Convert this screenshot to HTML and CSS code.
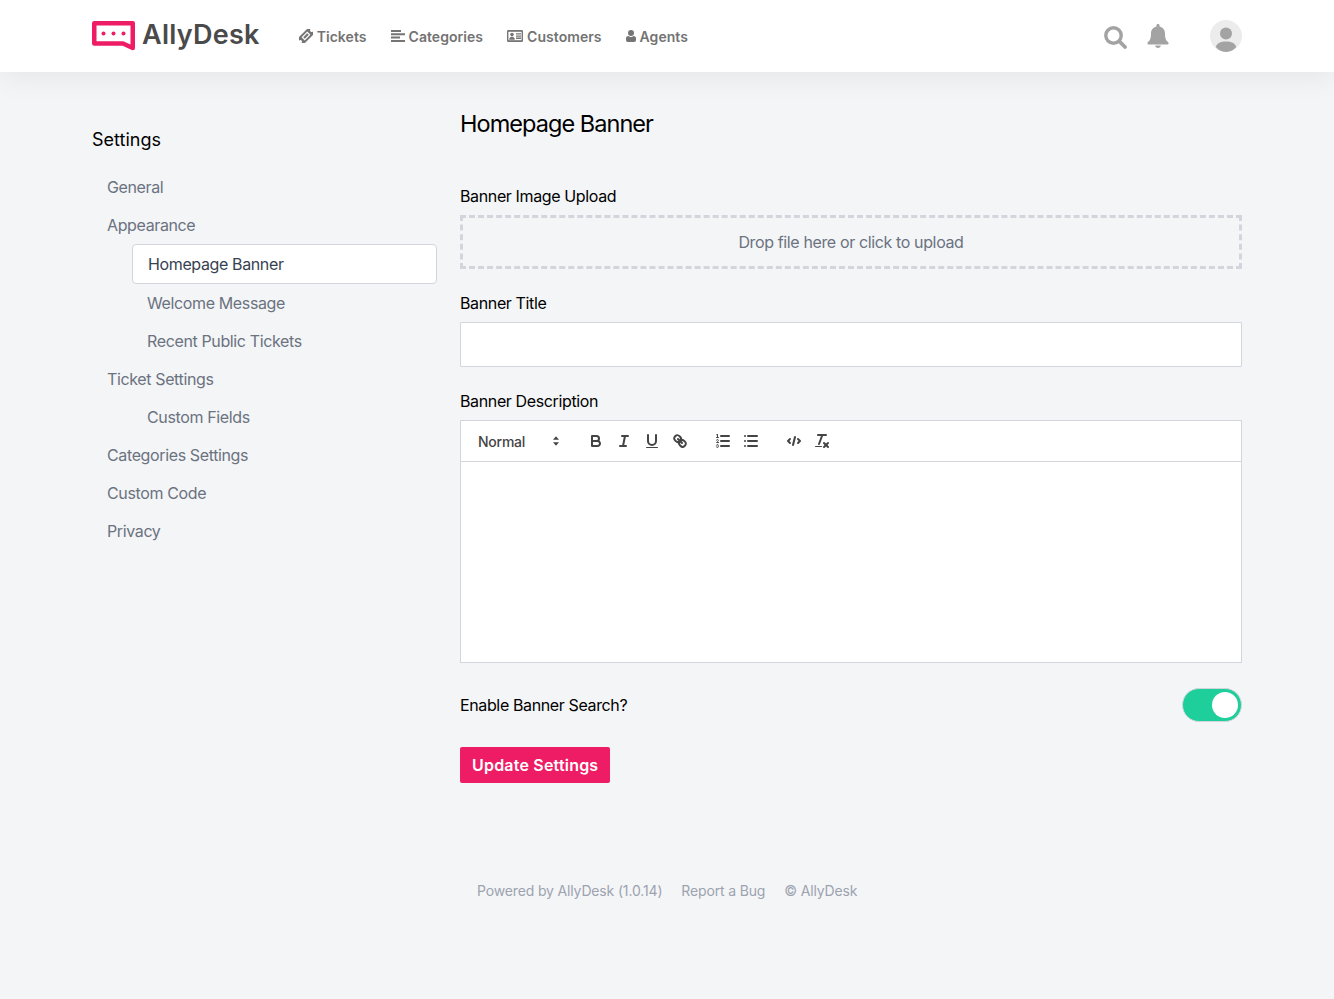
FILE: index.html
```html
<!DOCTYPE html>
<html lang="en">
<head>
    <meta charset="UTF-8">
    <meta name="viewport" content="width=device-width, initial-scale=1.0">
    <title>AllyDesk Settings</title>
    <link rel="stylesheet" href="styles.css">
</head>
<body>
    <header class="topbar">
        <div class="logo">
            <svg class="logo-mark" width="44" height="30" viewBox="0 0 44 30">
                <path d="M2.25 2.25H40.75V27L31 22.5H2.25Z" fill="#fff" stroke="#ee1c64" stroke-width="4.5" stroke-linejoin="round"/>
                <circle cx="11.500" cy="12.500" r="2" fill="#ee1c64"/>
                <circle cx="21.500" cy="12.500" r="2" fill="#ee1c64"/>
                <circle cx="31.500" cy="12.500" r="2" fill="#ee1c64"/>
            </svg>
            <span class="logo-text">AllyDesk</span>
        </div>
        <nav class="nav">
            <a href="#" class="nav-link">
                <svg class="nav-icon" width="14" height="14" viewBox="0 0 14 14"><g transform="rotate(-45 7 7)"><path d="M-1 2.800H15V5.400A1.600 1.600 0 0 0 15 8.600V11.200H-1V8.600A1.600 1.600 0 0 0 -1 5.400Z" fill="#757575"/><rect x="3" y="4.800" width="8" height="4.400" fill="#fff"/><rect x="4.200" y="5.900" width="5.600" height="2.200" fill="#757575"/></g></svg>
                Tickets
            </a>
            <a href="#" class="nav-link">
                <svg class="nav-icon" width="14" height="12" viewBox="0 0 14 12"><path d="M0 0H10V2H0ZM0 3.300H14V5.300H0ZM0 6.600H9V8.600H0ZM0 9.900H14V11.900H0Z" fill="#757575"/></svg>
                Categories
            </a>
            <a href="#" class="nav-link">
                <svg class="nav-icon" width="16" height="12" viewBox="0 0 16 12"><rect width="16" height="12" rx="1.200" fill="#757575"/><rect x="1.400" y="1.800" width="13.200" height="8.400" fill="#fff"/><circle cx="5" cy="4.600" r="1.800" fill="#757575"/><path d="M2.200 9.800C2.200 7.600 3.400 6.800 5 6.800S7.800 7.600 7.800 9.800ZM9 3.200H14V4.600H9ZM9 5.400H14V6.800H9ZM9 7.600H14V9H9Z" fill="#757575"/></svg>
                Customers
            </a>
            <a href="#" class="nav-link">
                <svg class="nav-icon" width="10" height="12" viewBox="0 0 10 12"><circle cx="5" cy="3" r="3" fill="#757575"/><path d="M0 10V8.400C0 6.800 1.200 6 2.400 6C3.200 6.600 4 6.900 5 6.900S6.800 6.600 7.600 6C8.800 6 10 6.800 10 8.400V10C10 11.200 9.200 12 8.200 12H1.800C.8 12 0 11.200 0 10Z" fill="#757575"/></svg>
                Agents
            </a>
        </nav>
        <div class="topbar-right">
            <svg class="top-search" width="23" height="23" viewBox="0 0 23 23"><circle cx="9.500" cy="9.500" r="7.700" fill="none" stroke="#a3a3a3" stroke-width="3.400"/><path d="M15.200 15.200L21 21" stroke="#a3a3a3" stroke-width="3.800" stroke-linecap="round"/></svg>
            <svg class="top-bell" width="22" height="24" viewBox="0 0 22 24"><path d="M11 0C10 0 9.400 .7 9.400 1.700V2.500C6 3.300 4 6 4 9.500C4 15 2.700 16.500 .8 18.200C0 19 .4 20.500 1.700 20.500H20.300C21.600 20.500 22 19 21.200 18.200C19.300 16.500 18 15 18 9.500C18 6 16 3.300 12.600 2.500V1.700C12.600 .7 12 0 11 0ZM8.200 21.500C8.200 23 9.500 24 11 24S13.800 23 13.800 21.500Z" fill="#a3a3a3"/></svg>
            <div class="avatar">
                <svg width="32" height="32" viewBox="0 0 32 32"><circle cx="16" cy="13.500" r="6" fill="#a3a3a3"/><path d="M5.800 27C7 23 10.500 21.500 16 21.500S25 23 26.200 27C23.500 30.300 20 32 16 32S8.500 30.300 5.800 27Z" fill="#a3a3a3"/></svg>
            </div>
        </div>
    </header>

    <div class="page">
        <aside class="sidebar">
            <h2 class="sidebar-title">Settings</h2>
            <ul class="side-list">
                <li><a href="#" class="side-link">General</a></li>
                <li><a href="#" class="side-link">Appearance</a></li>
                <li><a href="#" class="side-link sub active">Homepage Banner</a></li>
                <li><a href="#" class="side-link sub">Welcome Message</a></li>
                <li><a href="#" class="side-link sub">Recent Public Tickets</a></li>
                <li><a href="#" class="side-link">Ticket Settings</a></li>
                <li><a href="#" class="side-link sub">Custom Fields</a></li>
                <li><a href="#" class="side-link">Categories Settings</a></li>
                <li><a href="#" class="side-link">Custom Code</a></li>
                <li><a href="#" class="side-link">Privacy</a></li>
            </ul>
        </aside>

        <main class="content">
            <h1 class="content-title">Homepage Banner</h1>

            <label class="field-label first">Banner Image Upload</label>
            <div class="dropzone">Drop file here or click to upload</div>

            <label class="field-label">Banner Title</label>
            <input class="text-input" type="text">

            <label class="field-label">Banner Description</label>
            <div class="editor">
                <div class="toolbar">
                    <div class="picker">
                        <span>Normal</span>
                        <svg width="18" height="18" viewBox="0 0 18 18"><polygon class="fill" points="6 7.800 9 4.200 12 7.800"/><polygon class="fill" points="6 10.200 9 13.800 12 10.200"/></svg>
                    </div>
                    <div class="tool-group">
                        <button class="tool"><svg width="18" height="18" viewBox="0 0 18 18"><path class="stroke" d="M5,4H9.500A2.500,2.500,0,0,1,12,6.500v0A2.500,2.500,0,0,1,9.500,9H5V4Z"/><path class="stroke" d="M5,9h5.500A2.500,2.500,0,0,1,13,11.500v0A2.500,2.500,0,0,1,10.500,14H5V9Z"/></svg></button>
                        <button class="tool"><svg width="18" height="18" viewBox="0 0 18 18"><line class="stroke" x1="7" x2="13" y1="4" y2="4"/><line class="stroke" x1="5" x2="11" y1="14" y2="14"/><line class="stroke" x1="8" x2="10" y1="14" y2="4"/></svg></button>
                        <button class="tool"><svg width="18" height="18" viewBox="0 0 18 18"><path class="stroke" d="M5,3V9a4,4,0,0,0,4,4H9a4,4,0,0,0,4-4V3"/><rect class="fill" height="1" rx=".5" ry=".5" width="12" x="3" y="15"/></svg></button>
                        <button class="tool"><svg width="18" height="18" viewBox="0 0 18 18"><line class="stroke" x1="7" x2="11" y1="7" y2="11"/><path class="stroke" d="M8.900,4.577a3.476,3.476,0,0,1,.36,4.679A3.476,3.476,0,0,1,4.577,8.900C3.185,7.500,2.035,6.400,4.217,4.217S7.500,3.185,8.900,4.577Z"/><path class="stroke" d="M13.423,9.100a3.476,3.476,0,0,0-4.679-.36,3.476,3.476,0,0,0,.36,4.679c1.392,1.392,2.500,2.542,4.679.36S14.815,10.500,13.423,9.100Z"/></svg></button>
                    </div>
                    <div class="tool-group">
                        <button class="tool"><svg width="18" height="18" viewBox="0 0 18 18"><line class="stroke" x1="7" x2="15" y1="4" y2="4"/><line class="stroke" x1="7" x2="15" y1="9" y2="9"/><line class="stroke" x1="7" x2="15" y1="14" y2="14"/><line class="thin" x1="2.500" x2="4.500" y1="5.500" y2="5.500"/><path class="fill" d="M3.500,6A0.500,0.500,0,0,1,3,5.500V3.085l-0.276.138A0.500,0.500,0,0,1,2.053,3c-0.124-.247-0.023-0.324.224-0.447l1-.5A0.500,0.500,0,0,1,4,2.500v3A0.500,0.500,0,0,1,3.500,6Z"/><path class="thin" d="M4.500,10.500h-2c0-.234,1.850-1.076,1.850-2.234A0.959,0.959,0,0,0,2.500,8.156"/><path class="thin" d="M2.500,14.846a0.959,0.959,0,0,0,1.850-.109A0.700,0.700,0,0,0,3.750,14a0.688,0.688,0,0,0,.6-0.736,0.959,0.959,0,0,0-1.850-.109"/></svg></button>
                        <button class="tool"><svg width="18" height="18" viewBox="0 0 18 18"><line class="stroke" x1="6" x2="15" y1="4" y2="4"/><line class="stroke" x1="6" x2="15" y1="9" y2="9"/><line class="stroke" x1="6" x2="15" y1="14" y2="14"/><line class="stroke" x1="3" x2="3" y1="4" y2="4"/><line class="stroke" x1="3" x2="3" y1="9" y2="9"/><line class="stroke" x1="3" x2="3" y1="14" y2="14"/></svg></button>
                    </div>
                    <div class="tool-group">
                        <button class="tool"><svg width="18" height="18" viewBox="0 0 18 18"><polyline class="stroke" points="5 7 3 9 5 11"/><polyline class="stroke" points="13 7 15 9 13 11"/><line class="stroke" x1="10" x2="8" y1="5" y2="13"/></svg></button>
                        <button class="tool"><svg width="18" height="18" viewBox="0 0 18 18"><line class="stroke" x1="5" x2="13" y1="3" y2="3"/><line class="stroke" x1="6" x2="9.350" y1="12" y2="3"/><line class="stroke" x1="11" x2="15" y1="11" y2="15"/><line class="stroke" x1="15" x2="11" y1="11" y2="15"/><rect class="fill" height="1" rx=".5" ry=".5" width="7" x="2" y="14"/></svg></button>
                    </div>
                </div>
                <div class="editor-body"></div>
            </div>

            <div class="toggle-row">
                <span class="toggle-label">Enable Banner Search?</span>
                <div class="toggle"><span class="toggle-knob"></span></div>
            </div>

            <button class="save-btn">Update Settings</button>

            <footer class="footer">
                <span>Powered by AllyDesk (1.0.14)</span>
                <a href="#">Report a Bug</a>
                <span>© AllyDesk</span>
            </footer>
        </main>
    </div>
</body>
</html>
```

FILE: styles.css
```css
* {
    box-sizing: border-box;
}

body {
    margin: 0;
    min-height: 999px;
    background: #f4f5f7;
    color: #000;
    font-family: 'Inter', sans-serif;
    font-size: 16px;
    letter-spacing: -0.37px;
}

a {
    text-decoration: none;
    color: inherit;
}

/* ===== TOP BAR ===== */
.topbar {
    height: 72px;
    background: #fff;
    padding: 0 92px;
    display: flex;
    align-items: center;
    box-shadow: 0 4px 30px rgba(0, 0, 0, 0.07);
}

.logo {
    display: flex;
    align-items: center;
    gap: 6px;
}

.logo-text {
    font-size: 27px;
    font-weight: 600;
    color: #4a4a4a;
    letter-spacing: 0.25px;
    margin-top: -3px;
}

.nav {
    display: flex;
    gap: 24px;
    margin-left: 39px;
}

.nav-link {
    display: flex;
    align-items: center;
    gap: 4px;
    font-size: 14px;
    font-weight: 600;
    letter-spacing: 0.05px;
    color: #737373;
}

.topbar-right {
    margin-left: auto;
    display: flex;
    align-items: center;
}

.top-search {
    margin-right: 20px;
    margin-top: 2px;
}

.top-bell {
    margin-right: 41px;
}

.avatar {
    width: 32px;
    height: 32px;
    border-radius: 50%;
    background: #ececec;
    overflow: hidden;
    margin-top: -1px;
}

.avatar svg {
    display: block;
}

/* ===== PAGE ===== */
.page {
    display: flex;
    padding: 0 92px;
}

.sidebar {
    width: 345px;
    margin-right: 23px;
    padding-top: 57px;
    flex-shrink: 0;
}

.sidebar-title {
    margin: 0 0 17px;
    font-size: 18px;
    line-height: 22px;
    font-weight: 400;
    letter-spacing: 0;
}

.side-list {
    list-style: none;
    margin: 0;
    padding: 0;
}

.side-link {
    display: block;
    height: 38px;
    line-height: 38px;
    padding-left: 15px;
    color: #6b7280;
}

.side-link.sub {
    margin-left: 40px;
}

.side-link.active {
    height: 40px;
    background: #fff;
    border: 1px solid #d2d6dc;
    border-radius: 4px;
    color: #374151;
}

.content {
    flex: 1;
    padding-top: 37px;
}

.content-title {
    margin: 0;
    font-size: 23.5px;
    line-height: 30px;
    font-weight: 400;
    letter-spacing: -0.95px;
}

.field-label {
    display: block;
    margin-top: 24px;
    margin-bottom: 9px;
    line-height: 20px;
    font-weight: 400;
}

.field-label.first {
    margin-top: 47px;
}

.dropzone {
    height: 54px;
    line-height: 48px;
    border: 3px dashed #d2d6dc;
    text-align: center;
    color: #6b7280;
}

.text-input {
    display: block;
    width: 100%;
    height: 45px;
    background: #fff;
    border: 1px solid #d2d6dc;
    border-radius: 1px;
}

.editor {
    background: #fff;
    border: 1px solid #d2d6dc;
}

.toolbar {
    height: 41px;
    padding: 0 8px;
    border-bottom: 1px solid #d2d6dc;
    display: flex;
    align-items: center;
}

.picker {
    width: 98px;
    margin-right: 15px;
    padding-left: 9px;
    padding-right: 2px;
    display: flex;
    justify-content: space-between;
    align-items: center;
    font-size: 14px;
    font-weight: 500;
    letter-spacing: -0.25px;
    color: #444;
}

.tool-group {
    display: flex;
    margin-right: 15px;
}

.tool {
    width: 28px;
    height: 24px;
    padding: 3px 5px;
    background: none;
    border: none;
}

.tool svg,
.picker svg {
    display: block;
}

.stroke {
    fill: none;
    stroke: #444;
    stroke-width: 2;
    stroke-linecap: round;
    stroke-linejoin: round;
}

.thin {
    fill: none;
    stroke: #444;
    stroke-width: 1;
    stroke-linecap: round;
    stroke-linejoin: round;
}

.fill {
    fill: #444;
}

.editor-body {
    height: 200px;
}

.toggle-row {
    margin-top: 25px;
    display: flex;
    justify-content: space-between;
    align-items: center;
}

.toggle {
    width: 60px;
    height: 34px;
    border-radius: 17px;
    background: #1fcf9b;
    border: 1px solid #d2d6dc;
    padding: 3px;
    display: flex;
    justify-content: flex-end;
}

.toggle-knob {
    width: 26px;
    height: 26px;
    border-radius: 50%;
    background: #fff;
}

.save-btn {
    display: block;
    margin-top: 25px;
    height: 36px;
    padding: 0 12px;
    background: #ee1c64;
    color: #fff;
    border: none;
    border-radius: 2px;
    font-family: inherit;
    font-size: 16px;
    font-weight: 600;
    letter-spacing: 0.2px;
}

.footer {
    margin-top: 99px;
    margin-left: 17px;
    display: flex;
    gap: 19px;
    font-size: 14px;
    line-height: 18px;
    letter-spacing: -0.15px;
    color: #9ca3af;
}
```
